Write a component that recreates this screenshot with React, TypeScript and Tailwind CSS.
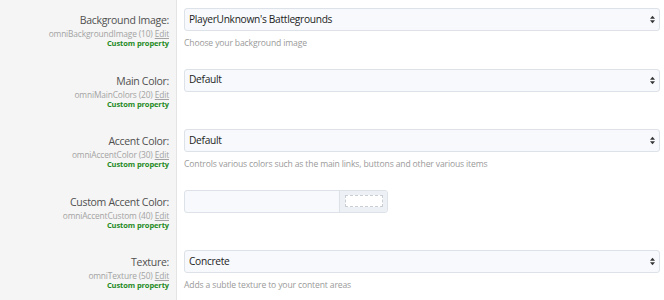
const font = { fontFamily: '"Open Sans", "Noto Sans", sans-serif' };

interface Row {
    label: string;
    name: string;
    order: number;
    value?: string;
    hint?: string;
    color?: boolean;
}

const rows: Row[] = [
    { label: "Background Image:", name: "omniBackgroundImage", order: 10, value: "PlayerUnknown's Battlegrounds", hint: "Choose your background image" },
    { label: "Main Color:", name: "omniMainColors", order: 20, value: "Default" },
    { label: "Accent Color:", name: "omniAccentColor", order: 30, value: "Default", hint: "Controls various colors such as the main links, buttons and other various items" },
    { label: "Custom Accent Color:", name: "omniAccentCustom", order: 40, color: true },
    { label: "Texture:", name: "omniTexture", order: 50, value: "Concrete", hint: "Adds a subtle texture to your content areas" },
];

function Arrows() {
    return (
        <svg width="5" height="9" viewBox="0 0 6 10" className="text-[#333]">
            <path d="M0 4 L3 0.5 L6 4 Z" fill="currentColor" />
            <path d="M0 6 L3 9.5 L6 6 Z" fill="currentColor" />
        </svg>
    );
}

export default function App() {
    return (
        <div className="w-[664px] h-[300px] bg-white overflow-hidden" style={font}>
            {rows.map((row) => (
                <div key={row.name} className="flex h-[60.5px]">
                    <div className="w-[177px] shrink-0 bg-[#f5f5f5] border-r border-[#e4e4e4] pr-[7px] pt-[12px] text-right">
                        <div className="text-[10.5px] leading-[16px] tracking-[-0.3px] text-[#505050]">{row.label}</div>
                        <div className="text-[8.4px] leading-[10px] tracking-[-0.15px] text-[#a3a3a3] mt-[1px]">
                            {row.name} ({row.order}) <span className="underline">Edit</span>
                        </div>
                        <div className="text-[7.5px] leading-[9px] tracking-[-0.1px] font-bold text-[#1f8a1f]">Custom property</div>
                    </div>
                    <div className="flex-1 pl-[7px] pr-[4px] pt-[8px]">
                        {row.color ? (
                            <div className="flex w-[204px] h-[23px] rounded-[3px] border border-[#dde2e8] bg-[#f7f9fc] overflow-hidden">
                                <div className="flex-1" />
                                <div className="w-[48px] border-l border-[#dde2e8] bg-[#edf1f6] flex items-center justify-center">
                                    <div className="w-[38px] h-[12px] bg-white border border-dashed border-[#c9ced4]" />
                                </div>
                            </div>
                        ) : (
                            <div className="flex items-center justify-between h-[23px] rounded-[3px] border border-[#dde2e8] bg-[#f7f9fc] pl-[4px] pr-[4px] text-[10.2px] tracking-[-0.3px] text-[#1d1d1d]">
                                <span>{row.value}</span>
                                <Arrows />
                            </div>
                        )}
                        {row.hint && (
                            <div className="text-[8.6px] leading-[14px] tracking-[-0.15px] text-[#9a9a9a] mt-[5px]">{row.hint}</div>
                        )}
                    </div>
                </div>
            ))}
        </div>
    );
}
